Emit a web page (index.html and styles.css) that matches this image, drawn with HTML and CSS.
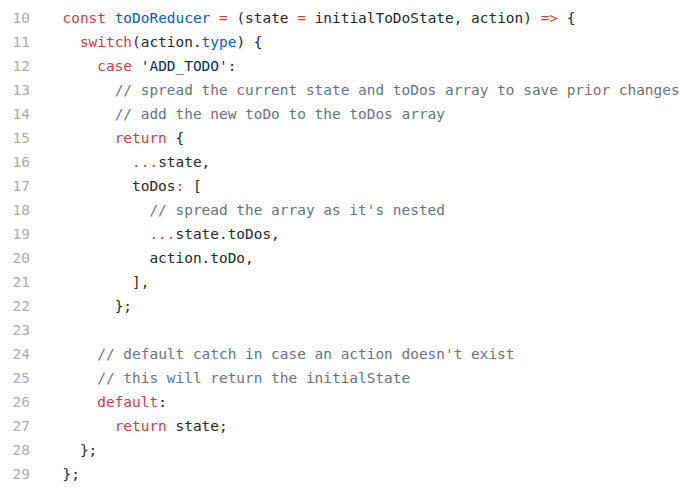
FILE: index.html
```html
<!DOCTYPE html>
<html>
<head>
<meta charset="utf-8">
<link rel="stylesheet" href="styles.css">
</head>
<body>
<div class="code">
<div class="ln"><span class="num">10</span><span class="src"><span class="k">const</span> <span class="f">toDoReducer</span> <span class="k">=</span> (state <span class="k">=</span> initialToDoState, action) <span class="k">=&gt;</span> {</span></div>
<div class="ln"><span class="num">11</span><span class="src">  <span class="k">switch</span>(action.<span class="f">type</span>) {</span></div>
<div class="ln"><span class="num">12</span><span class="src">    <span class="k">case</span> <span class="s">'ADD_TODO'</span>:</span></div>
<div class="ln"><span class="num">13</span><span class="src">      <span class="c">// spread the current state and toDos array to save prior changes</span></span></div>
<div class="ln"><span class="num">14</span><span class="src">      <span class="c">// add the new toDo to the toDos array</span></span></div>
<div class="ln"><span class="num">15</span><span class="src">      <span class="k">return</span> {</span></div>
<div class="ln"><span class="num">16</span><span class="src">        <span class="k">...</span>state,</span></div>
<div class="ln"><span class="num">17</span><span class="src">        toDos<span class="k">:</span> [</span></div>
<div class="ln"><span class="num">18</span><span class="src">          <span class="c">// spread the array as it's nested</span></span></div>
<div class="ln"><span class="num">19</span><span class="src">          <span class="k">...</span>state.toDos,</span></div>
<div class="ln"><span class="num">20</span><span class="src">          action.toDo,</span></div>
<div class="ln"><span class="num">21</span><span class="src">        ],</span></div>
<div class="ln"><span class="num">22</span><span class="src">      };</span></div>
<div class="ln"><span class="num">23</span><span class="src"></span></div>
<div class="ln"><span class="num">24</span><span class="src">    <span class="c">// default catch in case an action doesn't exist</span></span></div>
<div class="ln"><span class="num">25</span><span class="src">    <span class="c">// this will return the initialState</span></span></div>
<div class="ln"><span class="num">26</span><span class="src">    <span class="k">default</span>:</span></div>
<div class="ln"><span class="num">27</span><span class="src">      <span class="k">return</span> state;</span></div>
<div class="ln"><span class="num">28</span><span class="src">  };</span></div>
<div class="ln"><span class="num">29</span><span class="src">};</span></div>
</div>
</body>
</html>
```
FILE: styles.css
```css
html, body {
  margin: 0;
  padding: 0;
  background: #ffffff;
}

.code {
  padding-top: 6px;
  font-family: "DejaVu Sans Mono", "Liberation Mono", monospace;
  font-size: 14.45px;
  line-height: 24px;
  color: #24292e;
}

.ln {
  display: flex;
  height: 24px;
}

.num {
  box-sizing: content-box;
  width: 18px;
  padding-left: 12px;
  padding-right: 32.5px;
  text-align: right;
  color: #a9adb1;
  flex: none;
}

.src {
  white-space: pre;
}

.k { color: #d73a49; }
.f { color: #005cc5; }
.c { color: #6a737d; }
.s { color: #032f62; }
```
